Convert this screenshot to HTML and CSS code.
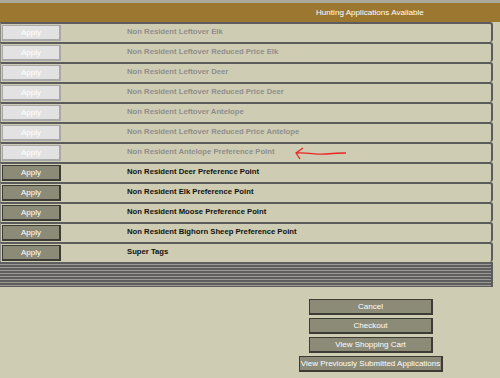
FILE: index.html
```html
<!DOCTYPE html>
<html lang="en">
<head>
    <meta charset="UTF-8">
    <title>Hunting Applications</title>
    <link rel="stylesheet" href="styles.css">
</head>
<body>

<div class="topstrip"></div>
<div class="header">Hunting Applications Available</div>

<div class="list">
    <div class="row"><button class="apply" disabled>Apply</button><span class="name off">Non Resident Leftover Elk</span></div>
    <div class="row"><button class="apply" disabled>Apply</button><span class="name off">Non Resident Leftover Reduced Price Elk</span></div>
    <div class="row"><button class="apply" disabled>Apply</button><span class="name off">Non Resident Leftover Deer</span></div>
    <div class="row"><button class="apply" disabled>Apply</button><span class="name off">Non Resident Leftover Reduced Price Deer</span></div>
    <div class="row"><button class="apply" disabled>Apply</button><span class="name off">Non Resident Leftover Antelope</span></div>
    <div class="row"><button class="apply" disabled>Apply</button><span class="name off">Non Resident Leftover Reduced Price Antelope</span></div>
    <div class="row marked">
        <button class="apply" disabled>Apply</button><span class="name off">Non Resident Antelope Preference Point</span>
        <svg class="arrow" width="54" height="14" viewBox="0 0 54 14">
            <path d="M2 6 C14 5, 22 8, 32 7 S 46 6, 52 6" fill="none" stroke="#ec2424" stroke-width="1.3"/>
            <path d="M9 1 L2 6 L6 12" fill="none" stroke="#ec2424" stroke-width="1.3"/>
        </svg>
    </div>
    <div class="row"><button class="apply">Apply</button><span class="name">Non Resident Deer Preference Point</span></div>
    <div class="row"><button class="apply">Apply</button><span class="name">Non Resident Elk Preference Point</span></div>
    <div class="row"><button class="apply">Apply</button><span class="name">Non Resident Moose Preference Point</span></div>
    <div class="row"><button class="apply">Apply</button><span class="name">Non Resident Bighorn Sheep Preference Point</span></div>
    <div class="row"><button class="apply">Apply</button><span class="name">Super Tags</span></div>
    <div class="stripes"></div>
</div>

<div class="actions">
    <button class="action">Cancel</button>
    <button class="action">Checkout</button>
    <button class="action">View Shopping Cart</button>
    <button class="action wide">View Previously Submitted Applications</button>
</div>

</body>
</html>
```

FILE: styles.css
```css
body {
    margin: 0;
    font-family: 'Liberation Sans', Arial, sans-serif;
    background-color: #cecdb3;
}

.topstrip {
    height: 3px;
    background-color: #a9a99c;
}

.header {
    height: 19px;
    line-height: 19px;
    background-color: #9c772f;
    color: #fff;
    font-size: 8.1px;
    padding-left: 316px;
}

.list {
    width: 493px;
}

.row {
    position: relative;
    display: flex;
    align-items: flex-start;
    height: 18px;
    border-top: 2px solid #5c5c5c;
    border-right: 2px solid #5c5c5c;
    border-left: 1px solid #8a8a80;
    border-radius: 0 3px 3px 0;
    box-sizing: content-box;
}

.apply {
    width: 59px;
    height: 16px;
    margin: 1px 0 0 1px;
    padding: 0;
    font-family: inherit;
    font-size: 8px;
    color: #fff;
    background-color: #8b8b77;
    border: 1px solid #3c3c34;
    border-width: 1px 2px 2px 1px;
}

.apply:disabled {
    background-color: #e2e2e2;
    border-color: #a8a8a8;
    color: #fff;
}

.name {
    margin-left: 66px;
    font-size: 7.7px;
    font-weight: bold;
    line-height: 15px;
    color: #111;
}

.name.off {
    color: #8e8e8e;
}

.arrow {
    position: absolute;
    left: 293px;
    top: 3px;
}

.stripes {
    height: 25px;
    border-right: 2px solid #5c5c5c;
    background: repeating-linear-gradient(#5e5e5e 0, #5e5e5e 2px, #9a9a92 2px, #9a9a92 3px);
}

.actions {
    display: flex;
    flex-direction: column;
    align-items: center;
    gap: 3px;
    width: 144px;
    margin: 12px 0 0 299px;
}

.action {
    width: 124px;
    height: 16px;
    padding: 0;
    font-family: inherit;
    font-size: 8px;
    white-space: nowrap;
    color: #fff;
    background-color: #8b8b77;
    border: 1px solid #3c3c34;
    border-width: 1px 2px 2px 1px;
}

.action.wide {
    width: 144px;
}
```
